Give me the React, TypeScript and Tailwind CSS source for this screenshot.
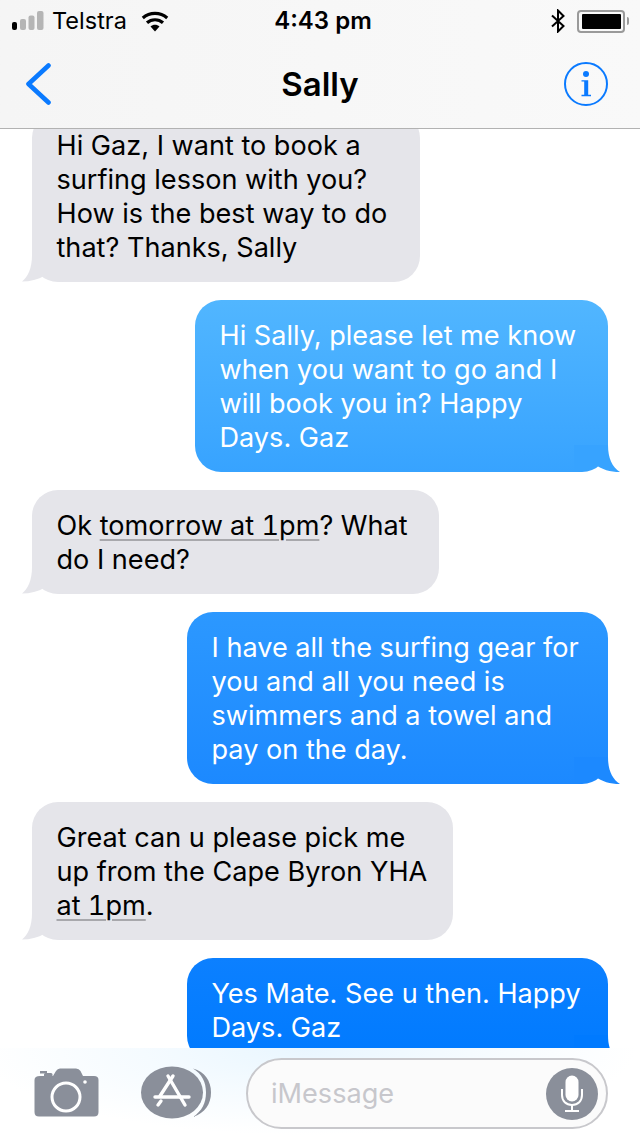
import React from "react";

const font = { fontFamily: "Inter, 'Liberation Sans', sans-serif" };

function TailLeft() {
  return (
    <svg className="absolute left-[-10px] bottom-0" width="54" height="27" viewBox="0 0 54 27">
      <path d="M10 0C10 13 6 22 0 26.5C8 26.5 16 24.5 23 20.5C28 24.5 35 27 44 27L44 0Z" fill="#e5e5ea" />
    </svg>
  );
}

function TailRight({ color }: { color: string }) {
  return (
    <svg className="absolute right-[-12px] bottom-0" width="56" height="27" viewBox="0 0 56 27">
      <path d="M44 0C44 13 48 22 56 27C46 27 38 24.500 31 19.500C26 24.500 19 27 10 27L10 0Z" fill={color} />
    </svg>
  );
}

function Left({ lines, width, first }: { lines: React.ReactNode[]; width: string; first?: boolean }) {
  return (
    <div className={`relative ml-8 ${width} ${first ? "mt-[-17px] pt-[17px] pb-[17px]" : "pt-[19px] pb-[17px]"} rounded-[26px] bg-[#e5e5ea] pl-[24.5px] pr-2 text-black`}>
      {lines.map((l, i) => (
        <div key={i} className="relative z-10 whitespace-nowrap">{l}</div>
      ))}
      <TailLeft />
    </div>
  );
}

function Right({ lines, width, bg, tail }: { lines: string[]; width: string; bg: string; tail: string }) {
  return (
    <div className={`relative ml-auto mr-8 ${width} ${bg} rounded-[26px] pl-[24.5px] pr-2 pt-[19px] pb-[17px] text-white`}>
      {lines.map((l, i) => (
        <div key={i} className="relative z-10 whitespace-nowrap">{l}</div>
      ))}
      <TailRight color={tail} />
    </div>
  );
}

export default function App() {
  return (
    <div className="flex h-[1136px] w-[640px] flex-col overflow-hidden bg-white" style={font}>
      <header className="relative z-20 h-[129px] shrink-0 border-b border-[#b2b2b2] bg-gradient-to-r from-[#f5f5f5] to-[#f9f9f9]">
        <div className="flex h-[42px] items-center text-[23px] text-black">
          <div className="flex flex-1 items-center pl-3">
            <svg width="33" height="20" viewBox="0 0 33 20">
              <rect x="0" y="11" width="5" height="8" rx="2" fill="#000" />
              <rect x="8" y="8" width="6" height="11" rx="2" fill="#b5b5b5" />
              <rect x="16.500" y="4.500" width="6" height="14.500" rx="2" fill="#b5b5b5" />
              <rect x="25" y="0" width="6.500" height="19" rx="2" fill="#b5b5b5" />
            </svg>
            <span className="ml-[7px] text-[23.500px] leading-none">Telstra</span>
            <svg className="ml-[14px]" width="28" height="21" viewBox="0 0 28 21">
              <path d="M14 20.500L9.500 15.500C12 13.300 16 13.300 18.500 15.500Z" fill="#000" />
              <path d="M6 11.800C10.500 7.700 17.500 7.700 22 11.800" stroke="#000" strokeWidth="3.200" fill="none" />
              <path d="M1.800 7C8.800 .9 19.200 .9 26.200 7" stroke="#000" strokeWidth="3.200" fill="none" />
            </svg>
          </div>
          <span className="ml-[5px] text-[24px] font-semibold leading-none">4:43 pm</span>
          <div className="flex flex-1 items-center justify-end pr-[11px]">
            <svg width="16" height="24" viewBox="0 0 16 24">
              <path d="M2 6.500L13.500 17L8 22.500V1.500L13.500 7L2 17.500" stroke="#000" strokeWidth="2" fill="none" />
            </svg>
            <div className="ml-[11px] flex h-[23px] w-[48px] items-center justify-center rounded-[4px] border-2 border-[#9a9a9a]">
              <div className="h-[15px] w-[39px] rounded-[1px] bg-black" />
            </div>
            <div className="ml-[2px] h-[8px] w-[2px] rounded-r-[2px] bg-[#9a9a9a]" />
          </div>
        </div>
        <div className="flex h-[86px] items-center pl-[25px] pr-[32px]">
          <div className="w-[51px] pb-[2px]">
            <svg width="26" height="42" viewBox="0 0 26 42">
              <path d="M23.500 2.500L3.500 21L23.500 39.500" stroke="#0a7aff" strokeWidth="4.600" strokeLinecap="round" strokeLinejoin="round" fill="none" />
            </svg>
          </div>
          <h1 className="flex-1 pb-[2px] text-center text-[33px] font-semibold leading-none text-black">Sally</h1>
          <svg className="mb-[2px]" width="44" height="44" viewBox="0 0 44 44">
            <circle cx="22" cy="22" r="21" fill="none" stroke="#0a7aff" strokeWidth="2" />
            <circle cx="22" cy="12" r="3" fill="#0a7aff" />
            <path d="M17.500 18.200H24.200V32.800H27V34.200H17.500V32.800H20.200V19.600H17.500Z" fill="#0a7aff" />
          </svg>
        </div>
      </header>

      <main className="flex min-h-0 flex-1 flex-col gap-[18px] overflow-hidden text-[27.1px] leading-[34px]">
        <Left
          first
          width="w-[388px]"
          lines={["Hi Gaz, I want to book a", "surfing lesson with you?", "How is the best way to do", "that? Thanks, Sally"]}
        />
        <Right
          width="w-[413px]"
          bg="bg-gradient-to-b from-[#51b6ff] to-[#37a3ff]"
          tail="#37a3ff"
          lines={["Hi Sally, please let me know", "when you want to go and I", "will book you in? Happy", "Days. Gaz"]}
        />
        <Left
          width="w-[407px]"
          lines={[
            <>Ok <span className="tabular-nums underline decoration-[#a8a8ac] decoration-[2px] underline-offset-[4px]">tomorrow at 1pm</span>? What</>,
            "do I need?",
          ]}
        />
        <Right
          width="w-[421px]"
          bg="bg-gradient-to-b from-[#2c98ff] to-[#1c89ff]"
          tail="#1c89ff"
          lines={["I have all the surfing gear for", "you and all you need is", "swimmers and a towel and", "pay on the day."]}
        />
        <Left
          width="w-[421px]"
          lines={[
            "Great can u please pick me",
            "up from the Cape Byron YHA",
            <><span className="tabular-nums underline decoration-[#a8a8ac] decoration-[2px] underline-offset-[4px]">at 1pm</span>.</>,
          ]}
        />
        <Right
          width="w-[421px]"
          bg="bg-gradient-to-b from-[#0c80ff] to-[#007aff]"
          tail="#007aff"
          lines={["Yes Mate. See u then. Happy", "Days. Gaz"]}
        />
      </main>

      <footer className="relative z-20 flex h-[88px] shrink-0 items-start bg-[radial-gradient(ellipse_at_48%_0%,#e9f6ff_0%,#f5fbff_35%,#ffffff_70%)] pl-[34px]">
        <svg className="mt-[20px]" width="65" height="49" viewBox="0 0 65 49">
          <path d="M6 8H10V6.500Q10 5 11.500 5H17Q18.500 5 18.500 6.500V8H19L22 3Q23.500 0.500 26 0.500H42Q45 0.500 46.500 3L49 8H60Q64.500 8 64.500 12V44Q64.500 48.500 60 48.500H5Q.5 48.500 .5 44V12Q.5 8 6 8Z" fill="#8a8f9a" />
          <rect x="6" y="3" width="7" height="2.500" fill="#8a8f9a" />
          <circle cx="32" cy="29" r="14" fill="none" stroke="#fff" strokeWidth="3" />
          <circle cx="51" cy="14" r="1.800" fill="#fff" />
        </svg>
        <svg className="ml-[42px] mt-[18px]" width="71" height="53" viewBox="0 0 71 53">
          <ellipse cx="31" cy="26.500" rx="31" ry="26" fill="#8a8f9a" />
          <path d="M52 2.500C64 6 70 15 70 26.500C70 38 64 47 52 51C61 45 65 37 65 26.500C65 16 61 8 52 2.500Z" fill="#8a8f9a" />
          <g stroke="#fff" strokeWidth="3.400" strokeLinecap="round" fill="none">
            <path d="M32 10L19 30" />
            <path d="M27 10L44 39" />
            <path d="M14 31H48" />
            <path d="M20 35L17 39" />
          </g>
        </svg>
        <div className="ml-[34px] mt-[10px] flex h-[71px] w-[362px] items-center rounded-[36px] border-2 border-[#c8c8cc] bg-[#fbfbfb] pl-[23px] pr-[8px]">
          <span className="flex-1 text-[27.1px] leading-none text-[#c7c7cc]">iMessage</span>
          <div className="flex h-[52px] w-[52px] items-center justify-center rounded-full bg-[#8a8f9a]">
            <svg width="24" height="38" viewBox="0 0 24 38">
              <rect x="5.500" y="0.500" width="13" height="26" rx="6.500" fill="#fff" />
              <path d="M2 14V20C2 26 6 30 12 30C18 30 22 26 22 20V14" stroke="#fff" strokeWidth="2" fill="none" />
              <path d="M12 30V36M5 36H19" stroke="#fff" strokeWidth="2" fill="none" />
            </svg>
          </div>
        </div>
      </footer>
    </div>
  );
}
